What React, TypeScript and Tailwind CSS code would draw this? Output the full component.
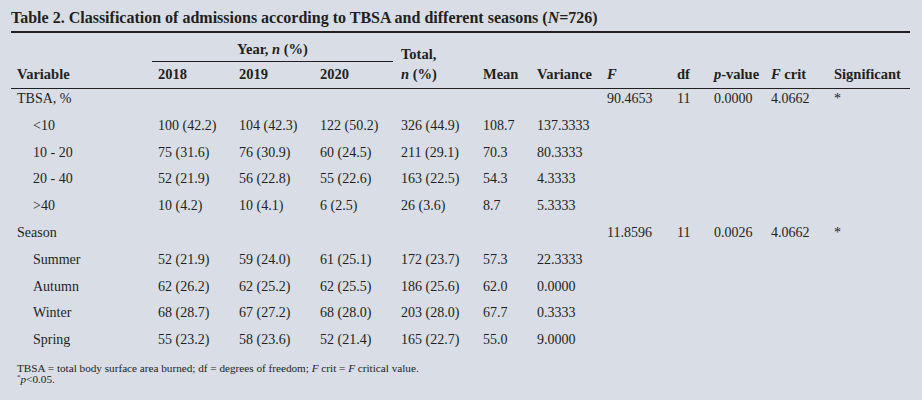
import React from "react";

const cols = "grid grid-cols-[141px_81px_81px_81px_82px_54px_70px_70px_37px_57px_63px_82px]";

type Row = { label: string; indent?: boolean; cells: string[] };

const rows: Row[] = [
  { label: "TBSA, %", cells: ["", "", "", "", "", "", "90.4653", "11", "0.0000", "4.0662", "*"] },
  { label: "<10", indent: true, cells: ["100 (42.2)", "104 (42.3)", "122 (50.2)", "326 (44.9)", "108.7", "137.3333", "", "", "", "", ""] },
  { label: "10 - 20", indent: true, cells: ["75 (31.6)", "76 (30.9)", "60 (24.5)", "211 (29.1)", "70.3", "80.3333", "", "", "", "", ""] },
  { label: "20 - 40", indent: true, cells: ["52 (21.9)", "56 (22.8)", "55 (22.6)", "163 (22.5)", "54.3", "4.3333", "", "", "", "", ""] },
  { label: ">40", indent: true, cells: ["10 (4.2)", "10 (4.1)", "6 (2.5)", "26 (3.6)", "8.7", "5.3333", "", "", "", "", ""] },
  { label: "Season", cells: ["", "", "", "", "", "", "11.8596", "11", "0.0026", "4.0662", "*"] },
  { label: "Summer", indent: true, cells: ["52 (21.9)", "59 (24.0)", "61 (25.1)", "172 (23.7)", "57.3", "22.3333", "", "", "", "", ""] },
  { label: "Autumn", indent: true, cells: ["62 (26.2)", "62 (25.2)", "62 (25.5)", "186 (25.6)", "62.0", "0.0000", "", "", "", "", ""] },
  { label: "Winter", indent: true, cells: ["68 (28.7)", "67 (27.2)", "68 (28.0)", "203 (28.0)", "67.7", "0.3333", "", "", "", "", ""] },
  { label: "Spring", indent: true, cells: ["55 (23.2)", "58 (23.6)", "52 (21.4)", "165 (22.7)", "55.0", "9.0000", "", "", "", "", ""] },
];

export default function App() {
  return (
    <div
      className="w-[922px] h-[400px] bg-[#d9dde5] text-[#231f20] overflow-hidden"
      style={{ fontFamily: '"Liberation Serif", "Times New Roman", serif' }}
    >
      <div className="pl-[11px] pr-[12px] pt-[8px]">
        <div className="text-[16px] font-bold leading-[20px]">
          Table 2. Classification of admissions according to TBSA and different seasons (<i>N</i>=726)
        </div>
        <div className="mt-[3px] border-t-2 border-[#231f20]" />
        {/* header */}
        <div className={`${cols} text-[14.5px] font-bold leading-[16px] pt-[8px]`}>
          <div />
          <div className="col-span-3 mr-[2px] border-b border-[#231f20] text-center pb-[2px]">
            Year, <i>n</i> (%)
          </div>
          <div className="pl-[6px] pt-[5px]">Total,</div>
          <div className="col-span-7" />
        </div>
        <div className={`${cols} text-[14.5px] font-bold leading-[16px] pt-[4px] pb-[6px] border-b border-[#231f20]`}>
          <div className="pl-[6px]">Variable</div>
          <div className="pl-[6px]">2018</div>
          <div className="pl-[6px]">2019</div>
          <div className="pl-[6px]">2020</div>
          <div className="pl-[6px]"><i>n</i> (%)</div>
          <div className="pl-[6px]">Mean</div>
          <div className="pl-[6px]">Variance</div>
          <div className="pl-[6px]"><i>F</i></div>
          <div className="pl-[6px]">df</div>
          <div className="pl-[6px] whitespace-nowrap"><i>p</i>-value</div>
          <div className="pl-[6px] whitespace-nowrap"><i>F</i> crit</div>
          <div className="pl-[6px] whitespace-nowrap">Significant</div>
        </div>
        <div className="text-[14px] leading-[16px]">
          {rows.map((r) => (
            <div key={r.label} className={`${cols} h-[26.8px] items-start pt-[2px]`}>
              <div className={r.indent ? "pl-[22px]" : "pl-[6px]"}>{r.label}</div>
              {r.cells.map((c, i) => (
                <div key={i} className="pl-[6px] whitespace-nowrap">{c}</div>
              ))}
            </div>
          ))}
        </div>
        <div className="pl-[6px] mt-[6px] text-[11.2px] leading-[11px]">
          <div>
            TBSA = total body surface area burned; df = degrees of freedom; <i>F</i> crit = <i>F</i> critical value.
          </div>
          <div>
            <sup className="text-[7px]">*</sup><i>p</i>&lt;0.05.
          </div>
        </div>
      </div>
    </div>
  );
}
